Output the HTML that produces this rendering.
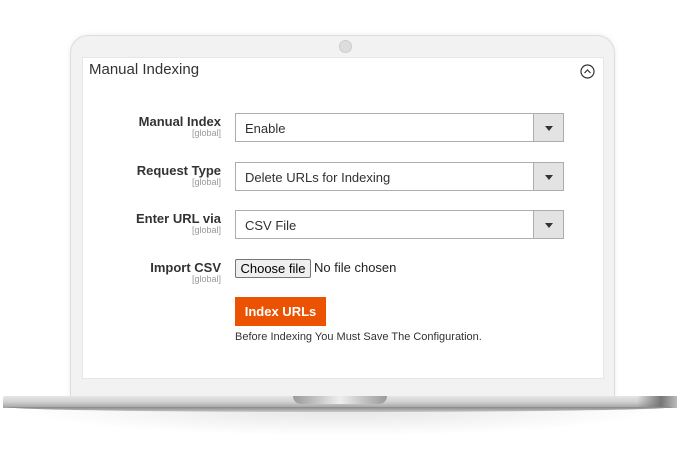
<!DOCTYPE html>
<html><head><style>
*{margin:0;padding:0;box-sizing:border-box}
body{width:680px;height:450px;background:#fff;position:relative;overflow:hidden;font-family:"Liberation Sans",sans-serif;color:#303030}
.bezel{position:absolute;left:70px;top:35px;width:545px;height:365px;background:#f2f2f2;border-radius:18px 18px 0 0;border:1px solid #ddd;box-shadow:0 0 6px rgba(0,0,0,.08)}
.cam{position:absolute;left:339px;top:40px;width:13px;height:13px;border-radius:50%;background:#ddd;border:1px solid #ccc}
.screen{position:absolute;left:82px;top:57px;width:522px;height:322px;background:#fff;border:1px solid #e6e6e6}
.base{position:absolute;left:3px;top:396px;width:674px;height:12px;background:linear-gradient(#e6e6e6,#d0d0d0 50%,#a0a0a0);border-radius:2px 2px 0 0}
.base:after{content:"";position:absolute;right:0;top:0;width:40px;height:12px;background:linear-gradient(90deg,rgba(120,120,120,0),#777 60%,#bbb)}
.base2{position:absolute;left:8px;top:407px;width:664px;height:5px;background:linear-gradient(#888,#c8c8c8);border-radius:0 0 50% 50%/0 0 100% 100%}
.shadow{position:absolute;left:20px;top:410px;width:640px;height:26px;background:radial-gradient(ellipse at top,rgba(0,0,0,.1),rgba(0,0,0,0) 70%)}
.notch{position:absolute;left:293px;top:396px;width:94px;height:8px;background:linear-gradient(90deg,#999,#eee 50%,#999);border-radius:0 0 8px 8px}
.title{position:absolute;left:89px;top:61px;font-size:15px;color:#333}
.icon{position:absolute;left:580px;top:64px}
.lab{position:absolute;right:459px;text-align:right;font-size:13px;font-weight:bold;color:#333}
.lab small{display:block;font-weight:normal;font-size:9px;color:#999;margin-top:-1px}
.sel{position:absolute;left:235px;width:329px;height:29px;border:1px solid #adadad;background:#fff;font-size:13px;padding:7px 9px;color:#303030}
.sel .b{position:absolute;right:0;top:0;width:30px;height:27px;background:#e3e3e3;border-left:1px solid #adadad}
.sel .b:after{content:"";position:absolute;left:11px;top:12px;border-left:4px solid transparent;border-right:4px solid transparent;border-top:5px solid #333}
.file{position:absolute;left:235px;top:259px;width:76px;height:19px;background:#efefef;border:1px solid #767676;border-radius:2px;font-size:13px;text-align:center;line-height:17px;color:#000}
.nf{position:absolute;left:314px;top:260px;font-size:13px;color:#222}
.btn{position:absolute;left:235px;top:297px;width:91px;height:29px;background:#eb5202;color:#fff;font-weight:bold;font-size:13px;text-align:center;line-height:29px}
.note{position:absolute;left:235px;top:331px;font-size:11px;color:#333}
</style></head><body>
<div class="bezel"></div>
<div class="cam"></div>
<div class="screen"></div>
<div class="shadow"></div>
<div class="base"></div>
<div class="base2"></div>
<div class="notch"></div>
<div class="title">Manual Indexing</div>
<svg class="icon" width="15" height="15" viewBox="0 0 15 15"><circle cx="7.5" cy="7.5" r="6.5" fill="none" stroke="#333" stroke-width="1.2"/><path d="M4.5 9 L7.5 6 L10.5 9" fill="none" stroke="#333" stroke-width="1.2"/></svg>
<div class="lab" style="top:114px">Manual Index<small>[global]</small></div>
<div class="sel" style="top:113px">Enable<div class="b"></div></div>
<div class="lab" style="top:163px">Request Type<small>[global]</small></div>
<div class="sel" style="top:162px">Delete URLs for Indexing<div class="b"></div></div>
<div class="lab" style="top:211px">Enter URL via<small>[global]</small></div>
<div class="sel" style="top:210px">CSV File<div class="b"></div></div>
<div class="lab" style="top:260px">Import CSV<small>[global]</small></div>
<div class="file">Choose file</div>
<div class="nf">No file chosen</div>
<div class="btn">Index URLs</div>
<div class="note">Before Indexing You Must Save The Configuration.</div>
</body></html>
